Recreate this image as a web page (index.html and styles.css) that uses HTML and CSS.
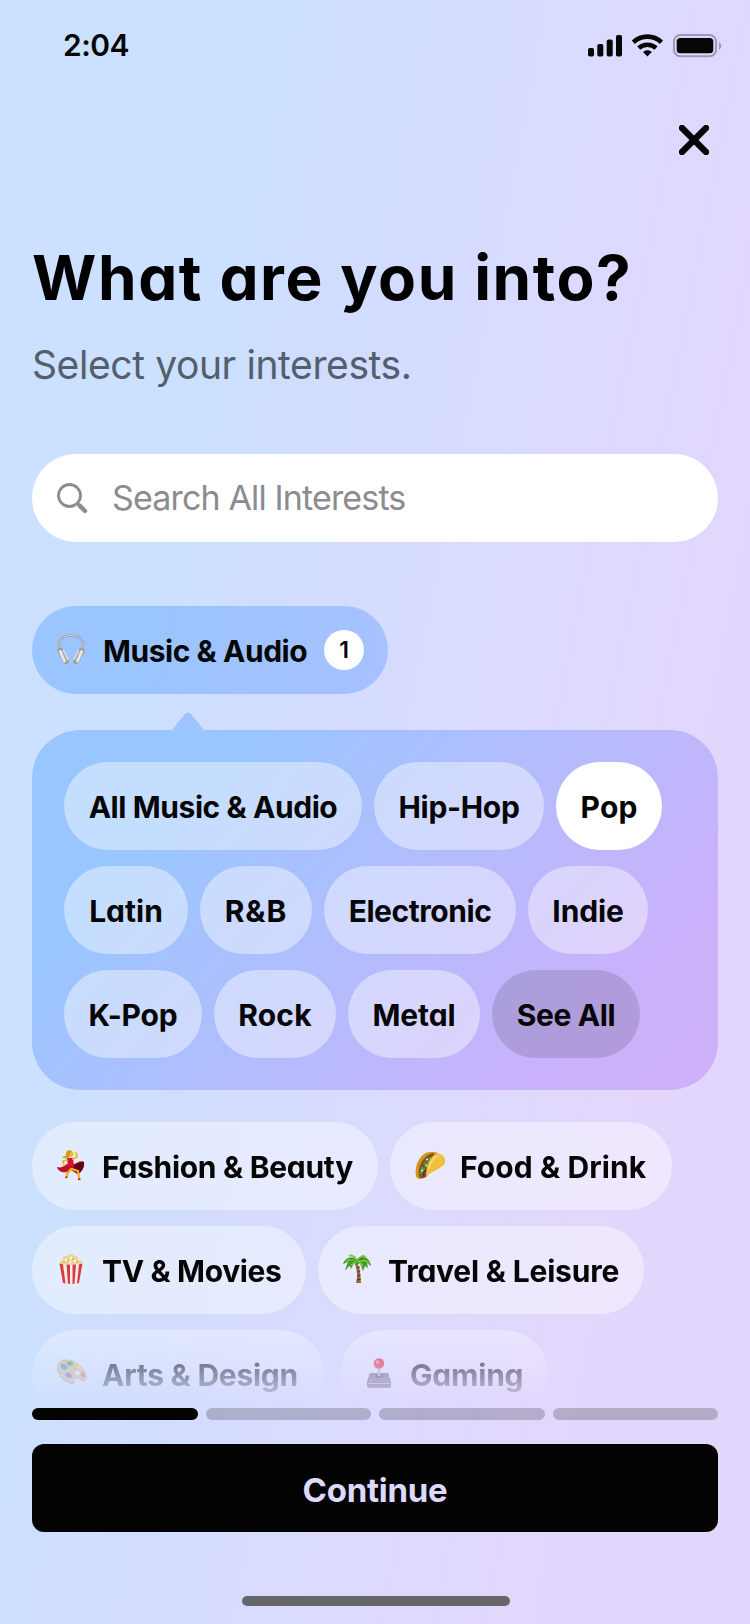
FILE: index.html
```html
<!DOCTYPE html>
<html lang="en">
<head>
<meta charset="utf-8">
<title>What are you into?</title>
<link rel="stylesheet" href="styles.css">
</head>
<body>
<main class="screen">
  <header class="status">
    <span class="status-time">2:04</span>
    <svg class="status-icons" width="134" height="24" viewBox="0 0 134 24">
      <rect x="0" y="14" width="6" height="8.500" rx="1.800"/>
      <rect x="9.300" y="10" width="6" height="12.500" rx="1.800"/>
      <rect x="18.700" y="5.500" width="6" height="17" rx="1.800"/>
      <rect x="28" y="1" width="6" height="21.500" rx="1.800"/>
      <g fill="none" stroke="#060606" stroke-width="4.600">
        <path d="M45.300 8.200C53.300.8 65.500.8 73.500 8.200"/>
        <path d="M50.700 14C55.800 9.600 63 9.600 68.100 14"/>
      </g>
      <path d="M55 18.100C57.500 15.500 61.300 15.500 63.800 18.100L59.400 22.600Z"/>
      <rect x="86" y="1" width="42" height="21.300" rx="6.500" fill="none" stroke="#9b99b4" stroke-width="2"/>
      <rect x="88.700" y="4" width="36.600" height="15.300" rx="3.600"/>
      <path d="M131 8.200C134 9.200 134 14.600 131 15.600Z" fill="#9b99b4"/>
    </svg>
  </header>
  <div class="toolbar">
    <svg class="close" width="30" height="30" viewBox="0 0 30 30"><path d="M3 3L27 27M27 3L3 27" fill="none" stroke="#060606" stroke-width="6.400" stroke-linecap="round"/></svg>
  </div>
  <h1 class="title">What are you into?</h1>
  <p class="subtitle">Select your interests.</p>
  <div class="search">
    <svg width="31" height="31" viewBox="0 0 31 31" fill="none" stroke="#8a8c91"><circle cx="12.500" cy="12.500" r="11" stroke-width="2.800"/><path d="M20.500 20.500L22.500 22.500" stroke-width="3"/><path d="M22.600 22.600L28 28" stroke-width="4.400" stroke-linecap="round"/></svg>
    <span class="placeholder">Search All Interests</span>
  </div>

  <section class="interests">
    <div class="row">
      <div class="chip category active music">
        <svg class="emoji" width="28" height="30" viewBox="0 0 28 30" fill="none">
          <path d="M3 17C-1 5 7 1.500 14 1.500S29 5 25 17" stroke="#8f8f94" stroke-width="2.200"/>
          <path d="M3 17C-1 5 7 1.500 14 1.500S29 5 25 17" stroke="#dadada" stroke-width="1"/>
          <path d="M3.500 17L9 27M24.500 17L19 27" stroke="#9c9c9f" stroke-width="6" stroke-linecap="round"/>
          <path d="M3.300 17.500L7.500 27M24.700 17.500L20.500 27" stroke="#e9e7e6" stroke-width="3" stroke-linecap="round"/>
          <path d="M6.500 16.500L11 25.500M21.500 16.500L17 25.500" stroke="#d8d8da" stroke-width="1.800" stroke-linecap="round"/>
        </svg>
        <span>Music &amp; Audio</span><b class="badge">1</b>
      </div>
    </div>
    <div class="panel">
      <svg class="arrow" width="32" height="19" viewBox="0 0 32 19"><path d="M0 18L12.500 2.500Q16 -1.500 19.500 2.500L32 18Z" fill="#9ec4ff"/></svg>
      <div class="row">
        <div class="chip all">All Music &amp; Audio</div><div class="chip hiphop">Hip-Hop</div><div class="chip pop selected">Pop</div>
      </div>
      <div class="row">
        <div class="chip latin">Latin</div><div class="chip rnb">R&amp;B</div><div class="chip electronic">Electronic</div><div class="chip indie">Indie</div>
      </div>
      <div class="row">
        <div class="chip kpop">K-Pop</div><div class="chip rock">Rock</div><div class="chip metal">Metal</div><div class="chip more">See All</div>
      </div>
    </div>

    <div class="categories">
      <div class="row">
        <div class="chip category fashion">
          <svg class="emoji" width="28" height="30" viewBox="0 0 28 30">
            <path d="M10 14C6 17 4 18 0 17C1 21 5 23 10 22L14 20L20 24C24 23 28 17 27 12C23 10 21 13 17 14Z" fill="#c20d22"/>
            <path d="M17 15C21 14 23 11 27 12C28 17 24 23 21 24L17 19Z" fill="#5d0715"/>
            <path d="M10 8H16L17 16L11 17Z" fill="#d31527"/>
            <path d="M10 10L6 11L7 15M16 9L20 7L19 2.500" fill="none" stroke="#f3b321" stroke-width="1.700" stroke-linecap="round"/>
            <path d="M14 19L10 24V27M15 19L21 21L22 28" fill="none" stroke="#f2b124" stroke-width="2.200" stroke-linecap="round"/>
            <circle cx="13.500" cy="4" r="3" fill="#f9bd2d"/>
            <path d="M15 1C11-1 9 1 9 4C9 7 7 6 5 7C9 10 13 8 13 4Z" fill="#d69a13"/>
            <path d="M8.500 28L10 26.500M21 29L23.500 29.500" stroke="#c20d22" stroke-width="1.500"/>
          </svg>
          <span>Fashion &amp; Beauty</span>
        </div>
        <div class="chip category food">
          <svg class="emoji" width="31" height="30" viewBox="0 0 31 30">
            <path d="M1 26C-1 12 8 0 19 2C23 2 24 5 24 7L8 28C5 30 2 29 1 26Z" fill="#d6931c"/>
            <path d="M4 26C2 17 8 6 18 3L22 7L12 26C9 29 5 29 4 26Z" fill="#79522c"/>
            <path d="M6 18L10 20M9 12L12 16M14 7L16 10M5 24L8 22M10 17L13 13M13 11L15 13" stroke="#58942f" stroke-width="2.800"/>
            <path d="M6 21L8 20M11 10L13 9M11 16L12 15" stroke="#e9e5cc" stroke-width="1.800"/>
            <path d="M8 25L9 23M11 22L10 20" stroke="#682015" stroke-width="2"/>
            <path d="M11 26C11 16 15 6 21 4C28 3 31 8 30 13C29 17 18 21 11 26Z" fill="#f1be42"/>
            <path d="M14 19C15 12 19 7 23 6" fill="none" stroke="#f9d76b" stroke-width="2"/>
          </svg>
          <span>Food &amp; Drink</span>
        </div>
      </div>
      <div class="row">
        <div class="chip category tv">
          <svg class="emoji" width="28" height="30" viewBox="0 0 28 30">
            <g fill="#ead39b"><circle cx="6" cy="9" r="3"/><circle cx="9" cy="5" r="3.300"/><circle cx="14" cy="3" r="3"/><circle cx="18" cy="5" r="3.300"/><circle cx="22" cy="9" r="3"/><path d="M6 6H21V11H6Z"/></g>
            <g fill="#fff1ca"><circle cx="9" cy="6" r="1.500"/><circle cx="14" cy="4" r="1.500"/><circle cx="18" cy="7" r="1.500"/><circle cx="13" cy="8" r="1.500"/></g>
            <g fill="#bc8c46"><circle cx="11" cy="7" r=".8"/><circle cx="16" cy="5" r=".8"/><circle cx="20" cy="8" r=".8"/><circle cx="7" cy="8" r=".7"/></g>
            <path d="M2.500 9.500Q14 12 25.500 9.500L22 29Q14 31 6 29Z" fill="#f4eeee"/>
            <path d="M2.500 9.500L6 10.200L8.500 29.500L6 29ZM9.500 10.600L13 10.800V30L11 29.800ZM15.500 10.800L19 10.600L17.500 29.700L15.500 30ZM22 10.200L25.500 9.500L22 29L20 29.400Z" fill="#d93b3f"/>
          </svg>
          <span>TV &amp; Movies</span>
        </div>
        <div class="chip category travel">
          <svg class="emoji" width="28" height="30" viewBox="0 0 28 30">
            <path d="M14 9C18 15 17 22 18 29H13C15 22 14 16 12 10Z" fill="#95653c"/>
            <path d="M14 14L17 13M14.500 18L17.300 17M14 22L17.500 21M14 26L18 25" stroke="#53351e" stroke-width="1"/>
            <path d="M14 7C10 1 2 3 0 10L5 8L2 16C4 16 5 12 7 12L8 15L11 9L14 11L17 9L20 17L22 12L25 14L24 9L28 12C27 4 20 0 14 5Z" fill="#3e9a29"/>
            <path d="M13 8C10 4 6 5 3 8M14 7C11 1 8 1 6 2M15 7C18 1 21 1 23 4M15 8C20 5 23 6 26 9M13 8L8 11M16 8L20 12" fill="none" stroke="#7ac83c" stroke-width="1.800"/>
            <path d="M13 7C10 4 9 4 7 5M16 6L20 4" stroke="#216320" stroke-width="1" fill="none"/>
          </svg>
          <span>Travel &amp; Leisure</span>
        </div>
      </div>
      <div class="row last">
        <div class="chip category arts">
          <svg class="emoji" width="30" height="30" viewBox="0 0 30 30">
            <path d="M2 5C9-1 19 4 25 10C30 15 31 22 27 23C24 24 22 19 19 20C16 22 21 26 15 26C5 24-4 12 2 5Z" fill="#a37944"/>
            <path d="M2 4C9-2 19 3 25 9C30 14 31 21 27 22C24 23 22 18 19 19C16 21 21 25 15 25C5 23-4 11 2 4Z" fill="#dfb574"/>
            <ellipse cx="7" cy="9" rx="3.500" ry="2.500" transform="rotate(35 7 9)" fill="#1694e8"/><ellipse cx="13" cy="5.500" rx="3" ry="2.300" fill="#2aab58"/><ellipse cx="22" cy="9.500" rx="3" ry="1.800" transform="rotate(35 22 9)" fill="#f4d04f"/><ellipse cx="12" cy="17.500" rx="3.500" ry="2.500" transform="rotate(25 12 17)" fill="#8342cf"/><ellipse cx="26" cy="17" rx="2" ry="3" transform="rotate(-35 26 17)" fill="#ef5260"/><circle cx="20.500" cy="15" r="2.300" fill="#f9f3ec"/>
          </svg>
          <span>Arts &amp; Design</span>
        </div>
        <div class="chip category gaming">
          <svg class="emoji" width="24" height="30" viewBox="0 0 24 30">
            <path d="M3 15H21L24 24V28Q24 30 21 30H3Q0 30 0 28V24Z" fill="#25252a"/>
            <path d="M3 15H21L23 24H1Z" fill="#4f4e57"/><path d="M1 25.500H23" stroke="#a5a3b0" stroke-width="1"/>
            <ellipse cx="12" cy="18" rx="4" ry="2" fill="#222228"/><path d="M12 10V18" stroke="#aaa9b5" stroke-width="2.400"/>
            <circle cx="12" cy="5.500" r="5.300" fill="#e31d34"/><circle cx="10.500" cy="4" r="1.800" fill="#ff8792"/><rect x="2.500" y="21.500" width="4.500" height="2" rx="1" fill="#ed253c"/>
          </svg>
          <span>Gaming</span>
        </div>
      </div>
    </div>
  </section>

  <footer class="footer">
    <div class="progress"><i class="done"></i><i></i><i></i><i></i></div>
    <button class="continue">Continue</button>
    <div class="home"></div>
  </footer>
</main>
</body>
</html>
```
FILE: styles.css
```css
* { box-sizing: border-box; }
body { margin: 0; }
.screen {
  width: 750px;
  height: 1624px;
  overflow: hidden;
  padding: 0 32px;
  display: flex;
  flex-direction: column;
  background: linear-gradient(101deg, #cbe1ff 25%, #d0ddff 35%, #d9dbff 56%, #e3d6fc 80%);
  color: #060606;
  font-family: Inter, "Noto Sans", sans-serif;
  font-feature-settings: "cv11";
}
.status {
  height: 92px;
  flex: none;
  display: flex;
  justify-content: space-between;
  padding: 34px 0 0 31px;
  margin-right: -4px;
}
.status-time { font-size: 30px; font-weight: 600; line-height: 23px; letter-spacing: -.5px; }
.status-icons { fill: #060606; }
.toolbar { height: 96px; flex: none; display: flex; justify-content: flex-end; padding: 33px 9px 0 0; }
.title { margin: 52px 0 0; font-size: 62px; line-height: 76px; font-weight: 700; letter-spacing: 1.6px; color: #000; white-space: nowrap; }
.subtitle { margin: 25px 0 0; font-size: 39px; line-height: 48px; letter-spacing: -.4px; color: #555e6c; }
.search {
  height: 88px;
  flex: none;
  margin-top: 65px;
  padding-left: 25px;
  display: flex;
  align-items: center;
  gap: 24px;
  border-radius: 44px;
  background: #fff;
}
.placeholder { margin-top: -2px; color: #8a8c91; font-size: 34px; letter-spacing: -.85px; font-feature-settings: normal; }
.interests { margin-top: 64px; flex: none; display: flex; flex-direction: column; }
.row { display: flex; gap: 12px; }
.chip {
  height: 88px;
  flex: none;
  display: flex;
  align-items: center;
  justify-content: center;
  padding-top: 1px;
  border-radius: 44px;
  background: rgba(255, 255, 255, .42);
  font-size: 30px;
  font-weight: 700;
  white-space: nowrap;
}
.category { justify-content: flex-start; padding-left: 25px; }
.emoji { flex: none; margin: -3px auto 0 0; overflow: visible; }
.category span { width: calc(100% - 45px); }
.active { background: linear-gradient(101deg, #9ac5ff 30%, #a6c1ff); }
.badge {
  width: 40px;
  height: 40px;
  flex: none;
  display: grid;
  place-items: center;
  margin: -1px 24px 0 0;
  border-radius: 50%;
  background: #fff;
  font-size: 23px;
  font-weight: 600;
}
.panel {
  position: relative;
  height: 360px;
  margin-top: 36px;
  padding: 32px;
  display: flex;
  flex-direction: column;
  gap: 16px;
  border-radius: 48px;
  background: linear-gradient(133deg, #9ac6ff 22%, #b3bcfd 52%, #c8b2fb 79%, #ceb0fa);
}
.arrow { position: absolute; left: 140px; top: -18px; }
.selected { background: #fff; }
.more { background: rgba(0, 0, 0, .12); }
.categories {
  height: 286px;
  margin-top: 32px;
  display: flex;
  flex-direction: column;
  gap: 16px;
  overflow: hidden;
  mask-image: linear-gradient(#000 188px, transparent 286px);
}
.last { gap: 16px; }
.all { width: 298px; letter-spacing: -.42px; }
.hiphop { width: 170px; letter-spacing: -.3px; }
.pop { width: 106px; letter-spacing: .1px; }
.latin { width: 124px; }
.rnb { width: 112px; letter-spacing: 1px; }
.electronic { width: 192px; letter-spacing: -.45px; }
.indie { width: 120px; letter-spacing: -.15px; }
.kpop { width: 138px; letter-spacing: -.2px; }
.rock { width: 122px; letter-spacing: .2px; }
.metal { width: 132px; letter-spacing: -.1px; }
.more { width: 148px; letter-spacing: -.4px; }
.music { width: 356px; letter-spacing: -.45px; }
.music span { width: 221px; }
.fashion { width: 346px; letter-spacing: -.3px; }
.food { width: 282px; letter-spacing: .1px; }
.tv { width: 274px; letter-spacing: -.35px; }
.travel { width: 326px; letter-spacing: -.2px; }
.arts { width: 292px; letter-spacing: -.25px; }
.gaming { width: 208px; padding-left: 27px; letter-spacing: -.2px; }
.gaming span { width: calc(100% - 43px); }
.footer { display: flex; flex-direction: column; align-items: center; }
.progress { width: 100%; display: flex; gap: 8px; }
.progress i { flex: 1; height: 12px; border-radius: 6px; background: rgba(0, 0, 0, .2); }
.progress .done { background: #030303; }
.continue {
  width: 100%;
  height: 88px;
  margin-top: 24px;
  padding: 3px 0 0;
  border: 0;
  border-radius: 12px;
  background: #030303;
  color: #ddd9fb;
  font: 700 33px Inter, sans-serif;
  letter-spacing: -.25px;
}
.home { width: 268px; height: 10px; margin: 64px 0 0 2px; border-radius: 5px; background: #65666a; }
```
